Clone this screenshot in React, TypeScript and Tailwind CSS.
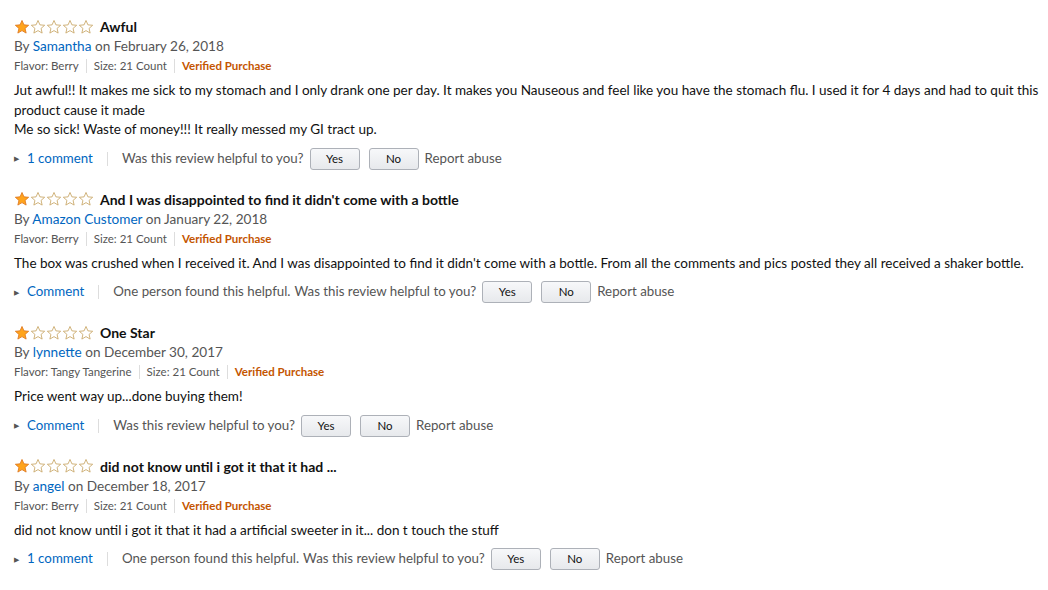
import React from 'react'

type Review = {
  title: string
  author: string
  date: string
  flavor: string
  body: string[]
  comment: string
  found?: string
}

const reviews: Review[] = [
  {
    title: 'Awful',
    author: 'Samantha',
    date: 'February 26, 2018',
    flavor: 'Berry',
    body: [
      'Jut awful!! It makes me sick to my stomach and I only drank one per day. It makes you Nauseous and feel like you have the stomach flu. I used it for 4 days and had to quit this product cause it made',
      'Me so sick! Waste of money!!! It really messed my GI tract up.',
    ],
    comment: '1 comment',
  },
  {
    title: "And I was disappointed to find it didn't come with a bottle",
    author: 'Amazon Customer',
    date: 'January 22, 2018',
    flavor: 'Berry',
    body: [
      "The box was crushed when I received it. And I was disappointed to find it didn't come with a bottle. From all the comments and pics posted they all received a shaker bottle.",
    ],
    comment: 'Comment',
    found: 'One person found this helpful.',
  },
  {
    title: 'One Star',
    author: 'lynnette',
    date: 'December 30, 2017',
    flavor: 'Tangy Tangerine',
    body: ['Price went way up...done buying them!'],
    comment: 'Comment',
  },
  {
    title: 'did not know until i got it that it had ...',
    author: 'angel',
    date: 'December 18, 2017',
    flavor: 'Berry',
    body: ['did not know until i got it that it had a artificial sweeter in it... don t touch the stuff'],
    comment: '1 comment',
    found: 'One person found this helpful.',
  },
]

function Star({ filled }: { filled: boolean }) {
  return (
    <svg width="16" height="16" viewBox="0 0 24 24" className="shrink-0">
      <path
        d="M12 2.2l2.9 6.6 7.1.6-5.4 4.7 1.6 7-6.2-3.7-6.2 3.7 1.6-7L2 9.4l7.1-.6z"
        fill={filled ? '#ffa41c' : '#fff'}
        stroke={filled ? '#de7921' : '#c9a767'}
        strokeWidth="1.3"
        strokeLinejoin="round"
      />
    </svg>
  )
}

function Btn({ label }: { label: string }) {
  return (
    <button className="h-[22px] w-[50px] rounded-[3px] border border-[#adb1b8] bg-gradient-to-b from-[#f7f8fa] to-[#e7e9ec] text-[11.5px] leading-none text-[#111]">
      {label}
    </button>
  )
}

function ReviewItem({ r }: { r: Review }) {
  return (
    <div className="flex flex-col">
      <div className="flex h-[19px] items-center gap-[6px]">
        <div className="flex">
          {[0, 1, 2, 3, 4].map((i) => (
            <Star key={i} filled={i === 0} />
          ))}
        </div>
        <span className="text-[14px] font-bold text-[#111]">{r.title}</span>
      </div>
      <div className="mt-[1px] h-[19px] text-[13.6px] leading-[19px] text-[#555]">
        By <span className="text-[#0066c0]">{r.author}</span> on {r.date}
      </div>
      <div className="flex h-[20px] items-center text-[11.5px] text-[#555]">
        <span>Flavor: {r.flavor}</span>
        <span className="mx-[7px] h-[14px] w-px bg-[#ddd]" />
        <span>Size: 21 Count</span>
        <span className="mx-[7px] h-[14px] w-px bg-[#ddd]" />
        <span className="font-bold text-[#c45500]">Verified Purchase</span>
      </div>
      <div className="mt-[5px] text-[13.5px] leading-[19.5px] text-[#111]">
        {r.body.map((b, i) => (
          <p key={i}>{b}</p>
        ))}
      </div>
      <div className="mt-[8px] flex h-[22px] items-center text-[13.3px] text-[#555]">
        <span className="mr-[8px] text-[7px] text-[#555]">▶</span>
        <span className="text-[#0066c0]">{r.comment}</span>
        <span className="mx-[14px] h-[14px] w-px bg-[#ddd]" />
        {r.found && <span className="mr-[4px]">{r.found}</span>}
        <span>Was this review helpful to you?</span>
        <div className="ml-[6px] flex gap-[9px]">
          <Btn label="Yes" />
          <Btn label="No" />
        </div>
        <span className="ml-[6px]">Report abuse</span>
      </div>
    </div>
  )
}

export default function App() {
  return (
    <div className="h-[590px] w-[1048px] overflow-hidden bg-white pl-[14px] pr-[6px] pt-[17px] font-['Lato',sans-serif]">
      <div className="flex flex-col gap-[20px]">
        {reviews.map((r, i) => (
          <ReviewItem key={i} r={r} />
        ))}
      </div>
    </div>
  )
}
